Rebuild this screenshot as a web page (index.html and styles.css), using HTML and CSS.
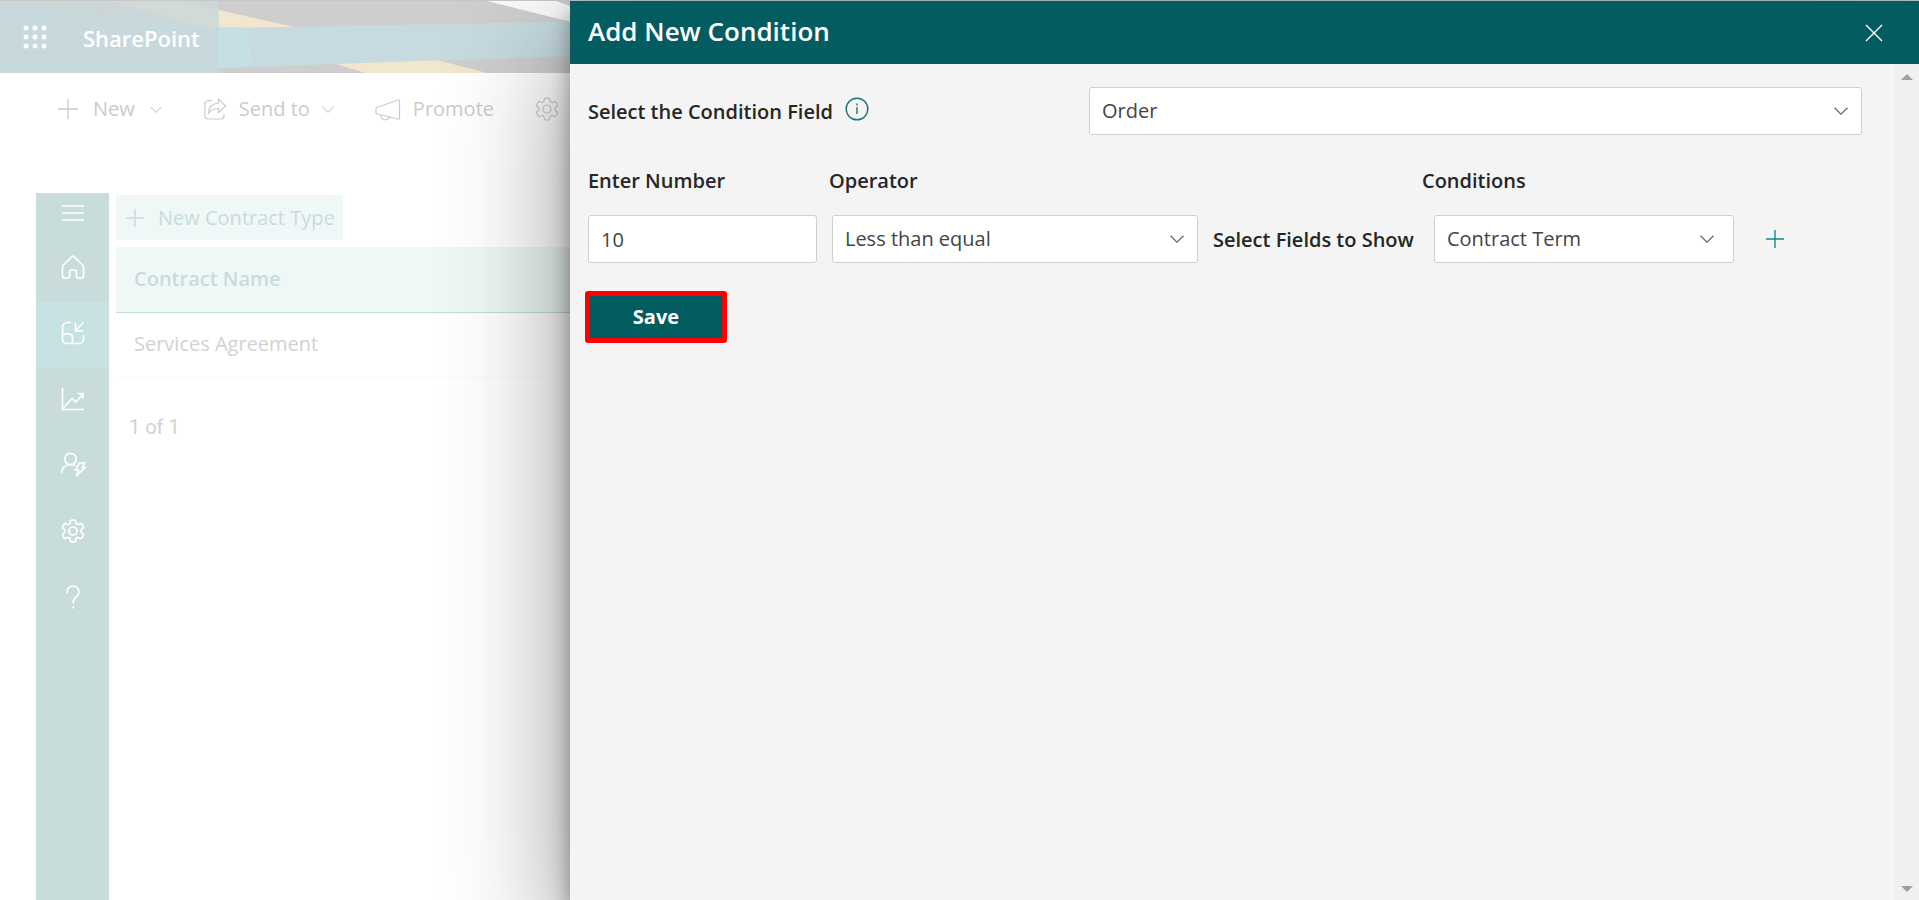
FILE: index.html
```html
<!DOCTYPE html>
<html lang="en">
<head>
<meta charset="utf-8">
<meta name="viewport" content="width=device-width, initial-scale=1">
<title>Add New Condition</title>
<link rel="stylesheet" href="styles.css">
</head>
<body>
<svg class="defs" aria-hidden="true">
  <symbol id="gear" viewBox="0 0 24 24"><path d="M9.300 2.300Q9.500 1 10.800 1h2.400q1.300 0 1.500 1.300l.3 1.700q.2 1 1.200 1.400 1 .3 1.900-.2l.9-.5q1.200-.6 1.900.5l1.300 2.300q.7 1.200-.4 1.900l-1 .8q-.9.700-.9 1.800t.9 1.800l1 .8q1.100.7.400 1.900l-1.300 2.300q-.7 1.100-1.900.5l-.9-.5q-.9-.5-1.900-.2-1 .4-1.200 1.400l-.3 1.700q-.2 1.300-1.500 1.300h-2.400q-1.300 0-1.500-1.300L9 20q-.2-1-1.200-1.400-1-.3-1.900.2l-.9.500q-1.200.6-1.900-.5l-1.300-2.300q-.7-1.200.4-1.900l1-.8q.9-.7.9-1.800t-.9-1.800l-1-.8q-1.100-.7-.4-1.900l1.300-2.300q.7-1.100 1.900-.5l.9.500q.9.500 1.900.2Q8.800 5 9 4z"/><circle cx="12" cy="12" r="4"/></symbol>
  <symbol id="chevron" viewBox="0 0 14 8"><path d="M.5.8 7 7.200 13.500.8"/></symbol>
  <symbol id="plus" viewBox="0 0 18 18"><path d="M9 0v18M0 9h18"/></symbol>
</svg>
<div class="site">
  <header class="suite">
    <svg class="art" viewBox="0 0 570 73" preserveAspectRatio="none" aria-hidden="true">
      <rect width="570" height="73" fill="#cecece"/>
      <path d="M180 0 219 9 300 28 219 27 120 0z" fill="#f3e6cf"/>
      <path d="M0 27h248L570 21v35L219 68 0 73z" fill="#c6dadf"/>
      <path d="M219 27h29l3 40-32 1z" fill="#c6dfe4"/>
      <path d="M336 64 438 60 487 73H366z" fill="#f3e6cf"/>
      <path d="M487 0h69l14 5v16z" fill="#fafafa"/>
      <path d="M0 0h219v73H0z" fill="#c7d9dc"/>
      <path d="M0 5 219 27V0H0z" fill="#cad6d7"/>
      <path d="M112 0h75l32 9v18l-25-2z" fill="#d0dad6"/>
    </svg>
    <button class="waffle" aria-label="App launcher">
      <svg width="24" height="24" viewBox="0 0 24 24" fill="#fff"><circle cx="3" cy="3" r="2.500"/><circle cx="12" cy="3" r="2.500"/><circle cx="21" cy="3" r="2.500"/><circle cx="3" cy="12" r="2.500"/><circle cx="12" cy="12" r="2.500"/><circle cx="21" cy="12" r="2.500"/><circle cx="3" cy="21" r="2.500"/><circle cx="12" cy="21" r="2.500"/><circle cx="21" cy="21" r="2.500"/></svg>
    </button>
    <a class="brand" href="#">SharePoint</a>
  </header>
  <nav class="commands" aria-label="Commands">
    <button class="command roomy"><svg class="icon" width="20" height="20"><use href="#plus"/></svg>New<svg class="icon caret" width="12" height="7"><use href="#chevron"/></svg></button>
    <button class="command"><svg class="icon" width="24" height="24" viewBox="0 0 24 24"><path d="M9 3.500H5a3 3 0 0 0-3 3V19a3 3 0 0 0 3 3h13a3 3 0 0 0 3-3v-2M15.500 2l7 7-7 6.500v-4C11 11.500 8 13 5.500 16 6 10 10 6.500 15.500 6z"/></svg>Send to<svg class="icon caret" width="12" height="7"><use href="#chevron"/></svg></button>
    <button class="command"><svg class="icon" width="26" height="24" viewBox="0 0 26 24"><path d="M2 10.500 23 3q1.500-.5 1.500 1v17q0 1.500-1.500 1L2 17q-1-.3-1-1.300v-4q0-1 1-1.200zM6 18.500a4.300 4.300 0 0 0 8.300 1.500"/></svg>Promote</button>
    <button class="command" aria-label="Page details"><svg class="icon" width="24" height="24"><use href="#gear"/></svg></button>
  </nav>
  <div class="workspace">
    <nav class="rail" aria-label="Sections">
      <button class="rail-item first" aria-label="Menu"><svg class="icon" width="22" height="16" viewBox="0 0 22 16"><path d="M0 1h22M0 8h22M0 15h22"/></svg></button>
      <button class="rail-item" aria-label="Home"><svg class="icon" width="24" height="24" viewBox="0 0 24 24"><path d="M2 10.500 11 1.700q1-.9 2 0l9 8.800q.5.600.5 1.400V21q0 2-2 2H17q-1.500 0-1.500-1.500V17q0-2-2-2h-3q-2 0-2 2v4.500Q8.500 23 7 23H3.500q-2 0-2-2v-9.100q0-.8.5-1.400z"/></svg></button>
      <button class="rail-item current" aria-label="Contract types"><svg class="icon" width="24" height="24" viewBox="0 0 24 24"><path d="M10 1.500H6A4.500 4.500 0 0 0 1.500 6v12A4.500 4.500 0 0 0 6 22.500h12a4.500 4.500 0 0 0 4.500-4.500v-4M1.500 13H8q3.500 0 3.500 3.500v6M22.500 1.500l-8 8M14.500 2v8h8"/></svg></button>
      <button class="rail-item" aria-label="Reports"><svg class="icon" width="24" height="24" viewBox="0 0 24 24"><path d="M1.500 1v21.500H23M2 21.500l9-10 4 3.500 7-8M16.500 6.500h5.500V12"/></svg></button>
      <button class="rail-item" aria-label="User actions"><svg class="icon" width="26" height="26" viewBox="0 0 26 26"><circle cx="10.500" cy="7" r="5.700"/><path d="M1.500 21c0-5 4-8.500 9-8.500q3 0 5 1.500"/><path d="M19.500 11h5l-2 4.500h2.500L16.500 24l2-6h-3z"/></svg></button>
      <button class="rail-item" aria-label="Settings"><svg class="icon" width="24" height="24"><use href="#gear"/></svg></button>
      <button class="rail-item" aria-label="Help"><svg class="icon" width="14" height="24" viewBox="0 0 14 24"><path d="M1 8V7a6 6 0 0 1 12 0c0 5-5.800 5-5.800 10v1.500M7.200 21v2.500"/></svg></button>
    </nav>
    <main class="list">
      <button class="new-type"><svg class="icon" width="18" height="18"><use href="#plus"/></svg>New Contract Type</button>
      <table class="types">
        <thead><tr><th scope="col">Contract Name</th></tr></thead>
        <tbody><tr><td>Services Agreement</td></tr></tbody>
      </table>
      <p class="pages">1 of 1</p>
    </main>
  </div>
</div>

<section class="panel" role="dialog" aria-labelledby="panel-title">
  <header class="panel-head">
    <h1 id="panel-title">Add New Condition</h1>
    <button class="close" aria-label="Close"><svg class="icon" width="18" height="18" viewBox="0 0 18 18"><path d="m1 1 16 16M17 1 1 17"/></svg></button>
  </header>
  <div class="panel-body">
    <form class="form">
      <div class="row field-row">
        <div class="label-group">
          <label for="field">Select the Condition Field</label>
          <svg class="icon info" width="24" height="24" viewBox="0 0 24 24" aria-hidden="true"><circle cx="12" cy="12" r="10.800"/><path d="M12 10v7M12 6.500v2"/></svg>
        </div>
        <div class="picker">
          <select id="field"><option>Order</option></select>
          <svg class="icon" width="14" height="8" aria-hidden="true"><use href="#chevron"/></svg>
        </div>
      </div>
      <div class="row heading-row">
        <label for="number">Enter Number</label>
        <label for="operator">Operator</label>
        <span>Conditions</span>
      </div>
      <div class="row rule-row">
        <input id="number" type="text" value="10">
        <div class="picker">
          <select id="operator"><option>Less than equal</option></select>
          <svg class="icon" width="14" height="8" aria-hidden="true"><use href="#chevron"/></svg>
        </div>
        <label class="show-label" for="show">Select Fields to Show</label>
        <div class="picker wide-end">
          <select id="show"><option>Contract Term</option></select>
          <svg class="icon" width="14" height="8" aria-hidden="true"><use href="#chevron"/></svg>
        </div>
        <button class="add" type="button" aria-label="Add condition"><svg class="icon" width="18" height="18"><use href="#plus"/></svg></button>
      </div>
      <button class="save" type="button">Save</button>
    </form>
    <div class="scroll" aria-hidden="true">
      <svg width="12" height="6" viewBox="0 0 12 6"><path d="M6 0l6 6H0z"/></svg>
      <svg width="12" height="6" viewBox="0 0 12 6"><path d="M0 0h12L6 6z"/></svg>
    </div>
  </div>
</section>
</body>
</html>
```
FILE: styles.css
```css
* { box-sizing: border-box; }
body {
  margin: 0;
  font-family: "Open Sans", "Noto Sans", sans-serif;
  font-size: 20px;
  line-height: 28px;
  color: #262626;
  background: #fff;
  overflow: hidden;
}
button, input, select { font: inherit; color: inherit; margin: 0; }
button { border: 0; padding: 0; background: none; }
.defs { position: absolute; width: 0; height: 0; }
.icon { display: block; flex: none; fill: none; stroke: currentColor; stroke-width: 1.4; overflow: visible; }

.site { height: 100vh; display: flex; flex-direction: column; border-top: 1px solid #c8c8c8; }
.suite { position: relative; flex: none; height: 72px; display: flex; align-items: center; gap: 36px; padding-left: 23px; background: #cecece; }
.art { position: absolute; inset: 0 auto 0 0; width: 570px; height: 100%; }
.waffle, .brand { position: relative; }
.waffle svg { display: block; }
.brand { padding-top: 2px; color: #fff; font-weight: 600; font-size: 22px; text-decoration: none; }
.commands { flex: none; height: 72px; display: flex; align-items: center; gap: 41px; padding-left: 58px; color: #cbcbcb; }
.command { display: flex; align-items: center; gap: 12px; white-space: nowrap; }
.command.roomy { gap: 15px; }
.command .icon { stroke-width: 1.2; }
.workspace { flex: 1; display: flex; gap: 7px; padding: 48px 0 0 36px; min-height: 0; }
.rail { flex: none; width: 73px; background: #c7dcdb; color: #fff; display: flex; flex-direction: column; }
.rail-item { height: 66px; padding-bottom: 4px; display: flex; align-items: center; justify-content: center; }
.rail-item .icon { stroke-width: 1.7; }
.rail-item.first { height: 43px; }
.rail-item.current { background: #c8e2e3; }
.list { flex: 1; padding-top: 2px; }
.new-type { display: flex; align-items: center; gap: 14px; height: 45px; padding: 0 8px 0 10px; background: #eff8f7; color: #c7dcdb; }
.types { width: 100%; margin-top: 7px; border-collapse: collapse; text-align: left; }
.types th { height: 65px; padding: 0 18px; background: #eff8f7; color: #c7dcdb; font-weight: 600; border-bottom: 1px solid #c3dbdb; }
.types td { height: 64px; padding: 0 18px; color: #d2d2d2; border-bottom: 1px solid #fafafa; }
.pages { margin: 36px 13px; font-family: Roboto, sans-serif; color: #d2d2d2; }

.panel {
  position: absolute; top: 1px; right: 0; bottom: 0; width: 70.3%;
  display: flex; flex-direction: column; background: #f4f4f4;
  box-shadow: 0 50px 114px rgba(0, 0, 0, .44), 0 10px 20px rgba(0, 0, 0, .36);
}
.panel-head { flex: none; height: 63px; padding: 0 36px 0 18px; display: flex; align-items: center; justify-content: space-between; background: #035c5f; color: #fff; }
.panel-head h1 { margin: 0; padding-bottom: 4px; font-size: 26px; line-height: 32px; font-weight: 600; }
.panel-body { flex: 1; display: flex; min-height: 0; }
.form { flex: 1; padding: 23px 33px 0 18px; font-weight: 600; }
.row { display: grid; align-items: center; }
.field-row { grid-template-columns: 501fr 773fr; }
.label-group { display: flex; align-items: center; gap: 12px; }
.label-group label, .show-label { padding-top: 2px; white-space: nowrap; }
.info { margin-bottom: 4px; color: #1d7478; }
.heading-row { grid-template-columns: 241fr 593fr 440fr; padding: 32px 0 20px; }
.rule-row { grid-template-columns: 229fr 366fr 206fr 300fr 113fr; column-gap: 15px; }
.picker { position: relative; }
.picker .icon { position: absolute; right: 14px; top: 20px; color: #666; stroke-width: 1.2; pointer-events: none; }
.picker.wide-end .icon { right: 20px; }
.form input, .form select {
  display: block; width: 100%; height: 48px; padding: 0 12px; font-weight: 400; color: #444;
  background: #fff; border: 1px solid #cfcfcd; border-radius: 3px; appearance: none; outline: 0;
}
.add { padding-left: 17px; color: #16898c; }
.save { display: block; margin: 28px 0 0 -3px; width: 142px; height: 52px; border: 5px solid #f00; border-radius: 3px; background: #035c5f; color: #fff; font-weight: 700; }
.scroll { flex: none; width: 24px; padding: 10px 6px 8px; background: #f0f0f0; fill: #a0a0a0; display: flex; flex-direction: column; justify-content: space-between; }
.scroll svg { display: block; }
```
